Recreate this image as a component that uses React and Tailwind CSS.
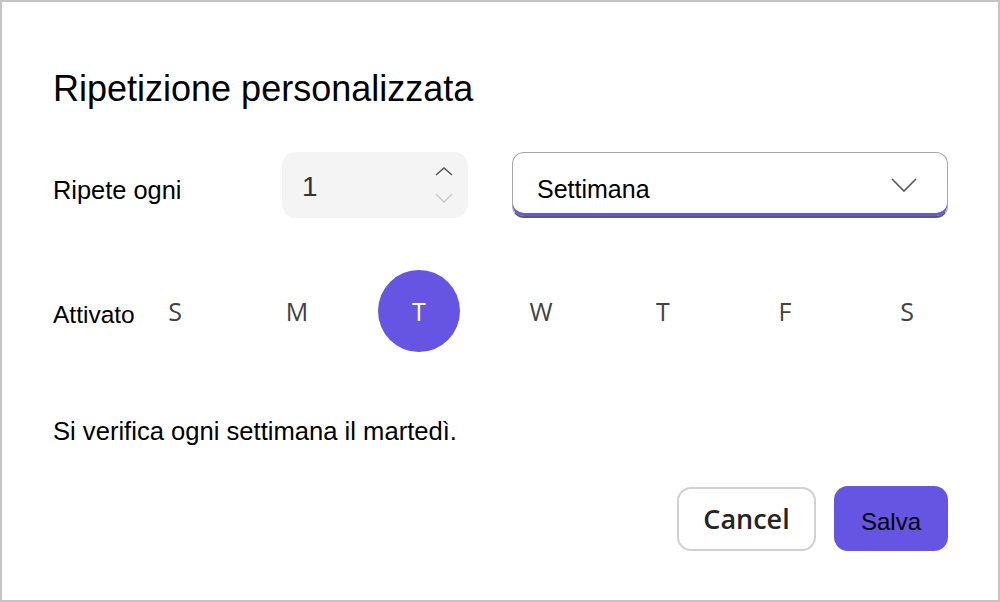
import React from 'react';

const days = ['S', 'M', 'T', 'W', 'T', 'F', 'S'];

const Stepper = () => (
  <svg width="18" height="36" viewBox="0 0 18 36" fill="none">
    <polyline points="1,8 9,1 17,8" stroke="#555555" strokeWidth="1.5" />
    <polyline points="1,27 9,35 17,27" stroke="#c8c8c8" strokeWidth="1.5" />
  </svg>
);

const Chevron = () => (
  <svg width="26" height="14" viewBox="0 0 26 14" fill="none">
    <polyline points="1,1 13,13 25,1" stroke="#555555" strokeWidth="1.6" />
  </svg>
);

const App = () => {
  const selected = 2;

  return (
    <div
      className="w-[1000px] h-[602px] border-2 border-[#c4c4c4] bg-white pl-[51px] pr-[50px] pt-[69px] text-black"
      style={{ fontFamily: '"Liberation Sans", Arial, sans-serif' }}
    >
      <h1 className="text-[36px] leading-[36px] h-[36px] font-normal">Ripetizione personalizzata</h1>

      <div className="flex items-start mt-[45px] h-[66px]">
        <span className="w-[229px] pt-[26px] text-[25.4px] leading-[25px]">Ripete ogni</span>
        <div className="w-[186px] h-[66px] rounded-[14px] bg-[#f4f4f4] flex items-center justify-between pl-[20px] pr-[15px]">
          <span className="text-[28px] leading-[28px] pt-[4px] text-[#333333]">1</span>
          <Stepper />
        </div>
        <div className="ml-[44px] w-[436px] h-[66px] rounded-[12px] border-[1.5px] border-[#a6a6a6] border-b-[2px] border-b-[#5c5c5c] shadow-[inset_0_-3px_0_#6655e3] flex items-center justify-between pl-[24px] pr-[30px]">
          <span className="text-[25px] leading-[25px] pt-[9px]">Settimana</span>
          <Chevron />
        </div>
      </div>

      <div className="flex items-start mt-[52px] h-[82px]">
        <span className="w-[81px] pt-[32px] text-[24.5px] leading-[25px]">Attivato</span>
        <div className="flex gap-[40px]">
          {days.map((d, i) => (
            <div
              key={i}
              className={`w-[82px] h-[82px] rounded-full flex items-center justify-center text-[25px] leading-[25px] ${
                i === selected ? 'bg-[#6655e3] text-white' : 'text-[#424242]'
              }`}
              style={{ fontFamily: '"Open Sans", sans-serif' }}
            >
              {d}
            </div>
          ))}
        </div>
      </div>

      <p className="mt-[67px] text-[25.6px] leading-[25px]">Si verifica ogni settimana il martedì.</p>

      <div className="flex justify-end gap-[18px] mt-[42px]">
        <button
          className="w-[139px] h-[64px] mt-[1px] rounded-[14px] border-2 border-[#d1d1d1] bg-white text-[27px] leading-[28px] font-semibold text-[#242424] flex items-center justify-center"
          style={{ fontFamily: '"Open Sans", sans-serif' }}
        >
          Cancel
        </button>
        <button className="w-[114px] h-[65px] rounded-[14px] bg-[#6655e3] text-[24px] leading-[24px] text-black flex items-center justify-center pt-[6px]">
          Salva
        </button>
      </div>
    </div>
  );
};

export default App;
